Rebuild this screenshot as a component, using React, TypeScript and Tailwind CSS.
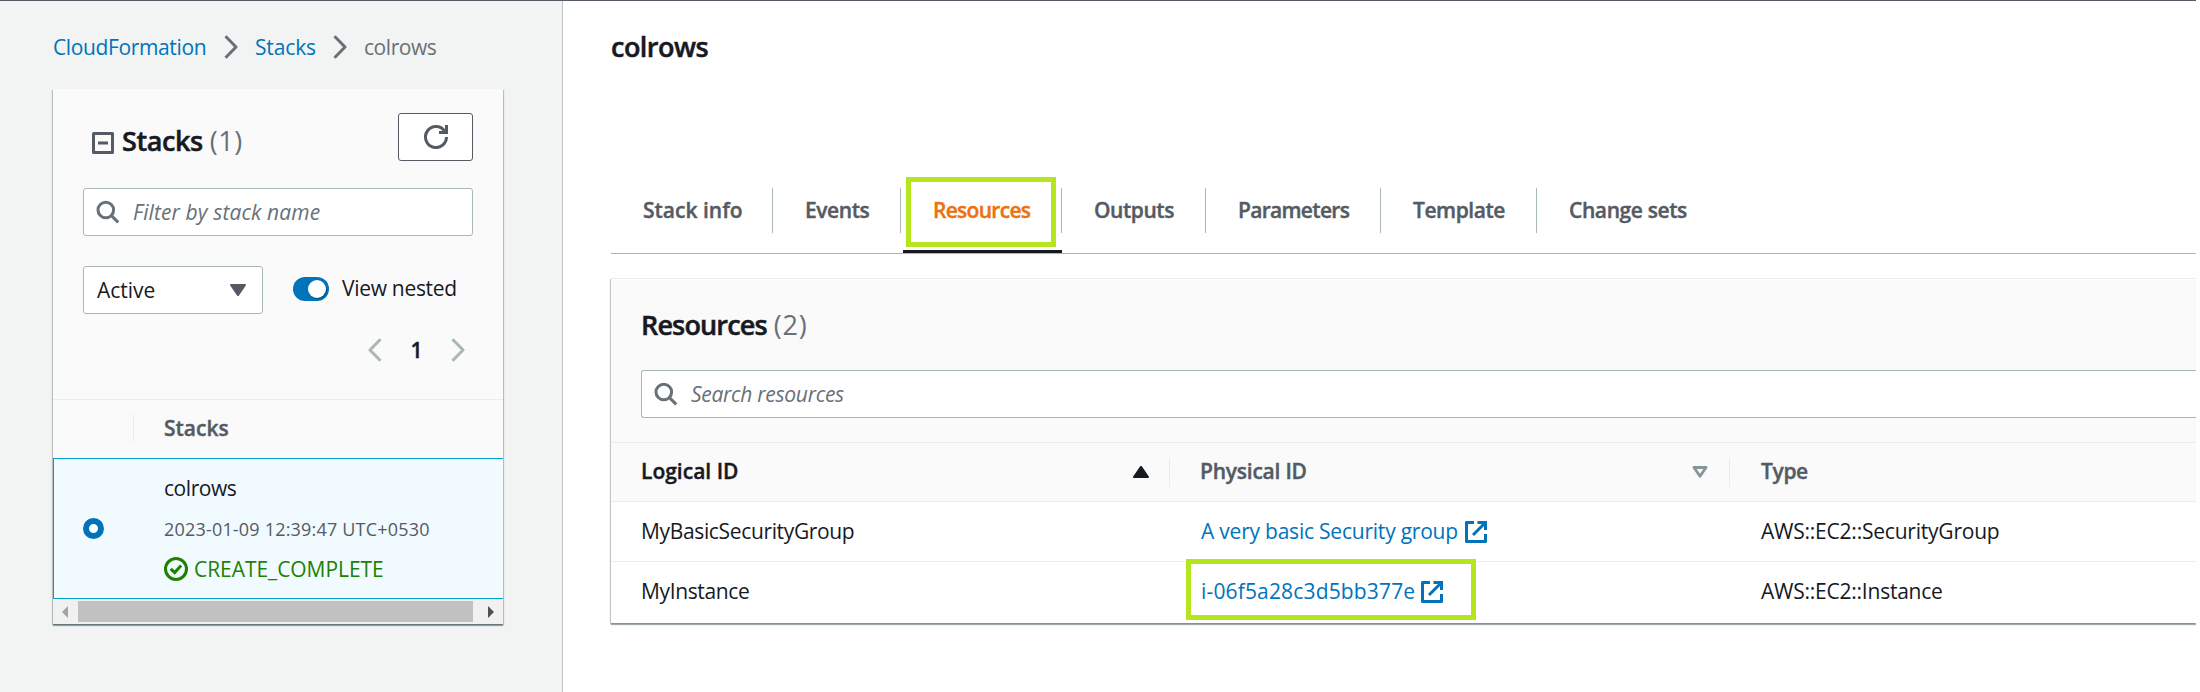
import React from "react";

type IconProps = { className?: string };

const SearchIcon = ({ className = "" }: IconProps) => (
  <svg viewBox="0 0 24 24" className={`h-6 w-6 shrink-0 ${className}`} fill="none" stroke="#687078" strokeWidth="3">
    <circle cx="9.8" cy="10" r="7.8" />
    <path d="M15.2 15.4l7 7" />
  </svg>
);

const RefreshIcon = () => (
  <svg viewBox="0 0 24 24" className="h-6 w-6" fill="none" stroke="#545b64" strokeWidth="3">
    <path d="M22.5 12A10.5 10.5 0 1 1 20.6 6" />
    <path d="M15 7.5h7.5V0" />
  </svg>
);

const CollapseIcon = () => (
  <svg viewBox="0 0 22 22" className="h-[22px] w-[22px]" fill="none" stroke="#545b64" strokeWidth="3">
    <rect x="1.5" y="1.5" width="19" height="19" strokeLinejoin="round" />
    <path d="M6 11h10" />
  </svg>
);

const Chevron = ({ className = "" }: IconProps) => (
  <svg viewBox="0 0 14 24" className={`h-6 w-[14px] shrink-0 ${className}`} fill="none" stroke="currentColor" strokeWidth="3">
    <path d="M1.5 1.2L12 12L1.5 22.8" strokeLinejoin="round" />
  </svg>
);

const ExternalIcon = () => (
  <svg viewBox="0 0 22 22" className="h-[22px] w-[22px] shrink-0" fill="none" stroke="#0073bb" strokeWidth="3">
    <path d="M9 1.5H1.5v19h19V13" strokeLinejoin="round" />
    <path d="M12.5 1.5h8V9M20.5 1.5L8 14" />
  </svg>
);

const StatusIcon = () => (
  <svg viewBox="0 0 24 24" className="h-6 w-6 shrink-0" fill="none" stroke="#1d8102" strokeWidth="3">
    <circle cx="12" cy="12" r="10.5" />
    <path d="M6.7 11.8l4 3.8 6.4-7" />
  </svg>
);

const Field = ({ children, className = "" }: { children: React.ReactNode; className?: string }) => (
  <div className={`flex h-12 items-center rounded-[3px] border border-[#aab7b8] bg-white ${className}`}>{children}</div>
);

const tabs = [
  { label: "Stack info", box: "w-[162px]", text: "" },
  { label: "Events", box: "w-[128px]", text: "tracking-[-0.42px]" },
  { label: "Resources", box: "w-[161px]", text: "tracking-[-0.71px]", active: true },
  { label: "Outputs", box: "w-[144px]", text: "tracking-[-0.45px]" },
  { label: "Parameters", box: "w-[175px]", text: "tracking-[-0.7px]" },
  { label: "Template", box: "w-[156px]", text: "tracking-[-0.45px]" },
  { label: "Change sets", box: "w-[180px]", text: "tracking-[-0.39px]" },
];

const Sidebar = () => (
  <aside className="w-[563px] shrink-0 border-r border-[#c1c4c4] bg-[#f2f3f3] pl-[53px] pt-[30px]">
    <nav className="flex h-8 items-center text-[#687078]">
      <a className="w-[171px] tracking-[-0.37px] text-[#0073bb]">CloudFormation</a>
      <Chevron />
      <a className="ml-[17px] w-[78px] tracking-[-0.15px] text-[#0073bb]">Stacks</a>
      <Chevron />
      <span className="ml-[17px] tracking-[-0.45px]">colrows</span>
    </nav>

    <section className="mt-[26px] h-[535px] w-[450px] bg-[#fafafa] shadow-[0_2px_1px_0_rgba(0,28,36,0.35),1px_1px_1px_0_rgba(0,28,36,0.2),-1px_1px_1px_0_rgba(0,28,36,0.2)]">
      <div className="h-[310px] px-[30px] pt-6">
        <div className="flex h-12 items-center">
          <div className="ml-[9px] pt-3">
            <CollapseIcon />
          </div>
          <h2 className="ml-2 pt-[7px] text-[27px] font-semibold leading-[40px]">
            <span className="tracking-[-0.4px] [-webkit-text-stroke:0.5px_#16191f]">Stacks</span>{" "}
            <span className="font-normal tracking-[0.45px] text-[#687078]">(1)</span>
          </h2>
          <button className="ml-auto flex h-12 w-[75px] items-center justify-center rounded-[3px] border border-[#545b64] bg-white">
            <RefreshIcon />
          </button>
        </div>
        <Field className="mt-[27px] pl-3">
          <SearchIcon />
          <span className="ml-[13px] italic tracking-[0.12px] text-[#687078]">Filter by stack name</span>
        </Field>
        <div className="mt-[30px] flex h-12">
          <Field className="w-[180px] justify-between pl-[13px] pr-4">
            <span>Active</span>
            <svg viewBox="0 0 16 12" className="h-3 w-4" fill="#545b64">
              <path d="M1 0h14a1 1 0 0 1 .8 1.5L9 11.4a1.2 1.2 0 0 1-2 0L.2 1.5A1 1 0 0 1 1 0z" />
            </svg>
          </Field>
          <div className="ml-[30px] mt-[11px] flex h-6 w-9 items-center justify-end rounded-full bg-[#0073bb] pr-[3px]">
            <div className="h-[18px] w-[18px] rounded-full bg-white shadow-[1px_1px_1px_rgba(0,0,0,0.3)]" />
          </div>
          <span className="ml-[13px] mt-[6px] leading-8 tracking-[-0.3px]">View nested</span>
        </div>
        <div className="mt-5 flex h-8 items-center justify-end pr-2 text-[#aab7b8]">
          <Chevron className="rotate-180" />
          <span className="w-[69px] text-center font-semibold text-[#16191f] [-webkit-text-stroke:0.4px]">1</span>
          <Chevron />
        </div>
      </div>

      <div className="flex h-[59px] border-t border-[#eaeded]">
        <div className="mt-[14px] h-7 w-[81px] border-r border-[#eaeded]" />
        <span className="ml-[30px] mt-3 font-semibold leading-8 text-[#545b64] [-webkit-text-stroke:0.4px]">Stacks</span>
      </div>

      <div className="flex h-[141px] items-center border border-r-0 border-[#00a1c9] bg-[#f1faff]">
        <div className="ml-[29px] h-[21px] w-[21px] rounded-full border-[6px] border-[#0073bb] bg-white" />
        <div className="ml-[60px] pb-px">
          <div className="h-[41px] leading-10 tracking-[-0.45px]">colrows</div>
          <div className="text-lg leading-10 tracking-[0.19px] text-[#545b64]">2023-01-09 12:39:47 UTC+0530</div>
          <div className="flex h-10 items-center text-[#1d8102]">
            <StatusIcon />
            <span className="ml-[6px] tracking-[-0.06px]">CREATE_COMPLETE</span>
          </div>
        </div>
      </div>

      <div className="flex h-[25px] items-center bg-[#f1f1f1]">
        <svg viewBox="0 0 6 12" className="ml-[9px] h-3 w-[6px]" fill="#a3a3a3">
          <path d="M6 0v12L0 6z" />
        </svg>
        <div className="ml-[10px] h-[21px] w-[395px] bg-[#c1c1c1]" />
        <svg viewBox="0 0 6 12" className="ml-[15px] h-3 w-[6px]" fill="#505050">
          <path d="M0 0v12l6-6z" />
        </svg>
      </div>
    </section>
  </aside>
);

const Highlight = ({ className }: { className: string }) => (
  <div className={`pointer-events-none absolute border-[5px] border-[#b5e61d] ${className}`} />
);

const Resources = () => (
  <section className="mt-6 h-[345px] border-t border-[#eaeded] bg-white pt-px shadow-[0_2px_1px_0_rgba(0,28,36,0.35),-1px_1px_1px_0_rgba(0,28,36,0.2)]">
    <div className="h-[162px] bg-[#fafafa] pl-[30px] pt-[25px]">
      <h2 className="text-[27px] font-semibold leading-[40px]">
        <span className="tracking-[-0.85px] [-webkit-text-stroke:0.5px]">Resources</span>{" "}
        <span className="font-normal tracking-[0.8px] text-[#687078]">(2)</span>
      </h2>
      <Field className="mt-[25px] rounded-r-none border-r-0 pl-3">
        <SearchIcon />
        <span className="ml-[13px] pb-px italic tracking-[-0.28px] text-[#687078]">Search resources</span>
      </Field>
    </div>
    <div className="grid h-[60px] grid-cols-[559px_560px_1fr] items-center border-y border-[#eaeded] bg-[#fafafa] font-semibold text-[#545b64]">
      <div className="flex h-[29px] items-center justify-between border-r border-[#eaeded] pl-[30px] pr-5 text-[#16191f]">
        <span className="pb-[2px] [-webkit-text-stroke:0.4px]">Logical ID</span>
        <svg viewBox="0 0 16 12" className="h-3 w-4" fill="#16191f">
          <path d="M1 12h14a1 1 0 0 0 .8-1.5L9 .6a1.2 1.2 0 0 0-2 0L.2 10.5A1 1 0 0 0 1 12z" />
        </svg>
      </div>
      <div className="flex h-[29px] items-center justify-between border-r border-[#eaeded] pl-[30px] pr-[21px]">
        <span className="pb-[2px] tracking-[-0.23px] [-webkit-text-stroke:0.4px]">Physical ID</span>
        <svg viewBox="0 0 16 12" className="h-3 w-4" fill="none" stroke="#879596" strokeWidth="2.8" strokeLinejoin="round">
          <path d="M2 1.5h12L8 10.3z" />
        </svg>
      </div>
      <span className="pb-[2px] pl-[31px] tracking-[-0.36px] [-webkit-text-stroke:0.4px]">Type</span>
    </div>
    <div className="grid h-[60px] grid-cols-[559px_560px_1fr] items-center border-b border-[#eaeded] pb-[2px]">
      <span className="pl-[30px] tracking-[-0.35px]">MyBasicSecurityGroup</span>
      <a className="flex items-center pl-[31px] text-[#0073bb]">
        <span className="mr-[7px] tracking-[-0.22px]">A very basic Security group</span>
        <span className="pt-[3px]"><ExternalIcon /></span>
      </a>
      <span className="pl-[31px] tracking-[-0.22px]">AWS::EC2::SecurityGroup</span>
    </div>
    <div className="grid h-[61px] grid-cols-[559px_560px_1fr] items-center pb-1">
      <span className="pl-[30px] tracking-[-0.36px]">MyInstance</span>
      <a className="flex items-center pl-[31px] text-[#0073bb]">
        <span className="mr-[6px] tracking-[0.16px]">i-06f5a28c3d5bb377e</span>
        <span className="pt-[3px]"><ExternalIcon /></span>
      </a>
      <span className="pl-[31px] tracking-[-0.23px]">AWS::EC2::Instance</span>
    </div>
  </section>
);

export default function App() {
  return (
    <div className="h-[692px] w-full bg-white pr-1">
      <div className="relative flex h-full overflow-hidden border-t border-[#545b64] font-['Open_Sans',sans-serif] text-[21px] leading-8 text-[#16191f]">
        <Sidebar />
        <main className="min-w-0 flex-1 pl-12 pt-[26px]">
          <h1 className="text-[27px] font-semibold leading-[40px] tracking-[-0.53px] [-webkit-text-stroke:0.5px]">colrows</h1>
          <div className="mt-[121px] flex h-[66px] border-b border-[#aab7b8] font-semibold text-[#545b64]">
            {tabs.map((t, i) => (
              <div key={t.label} className={`flex flex-col justify-between ${t.box}`}>
                <div className={`flex h-[45px] items-center pb-px pl-[32px] ${i < tabs.length - 1 ? "border-r border-[#aab7b8]" : ""}`}>
                  <span className={`[-webkit-text-stroke:0.4px] ${t.text} ${t.active ? "text-[#ec7211]" : ""}`}>{t.label}</span>
                </div>
                {t.active && <div className="ml-[2px] h-[3px] bg-[#16191f]" />}
              </div>
            ))}
          </div>
          <Resources />
        </main>
        <Highlight className="left-[906px] top-[176px] h-[70px] w-[150px]" />
        <Highlight className="left-[1186px] top-[558px] h-[61px] w-[290px]" />
      </div>
    </div>
  );
}
